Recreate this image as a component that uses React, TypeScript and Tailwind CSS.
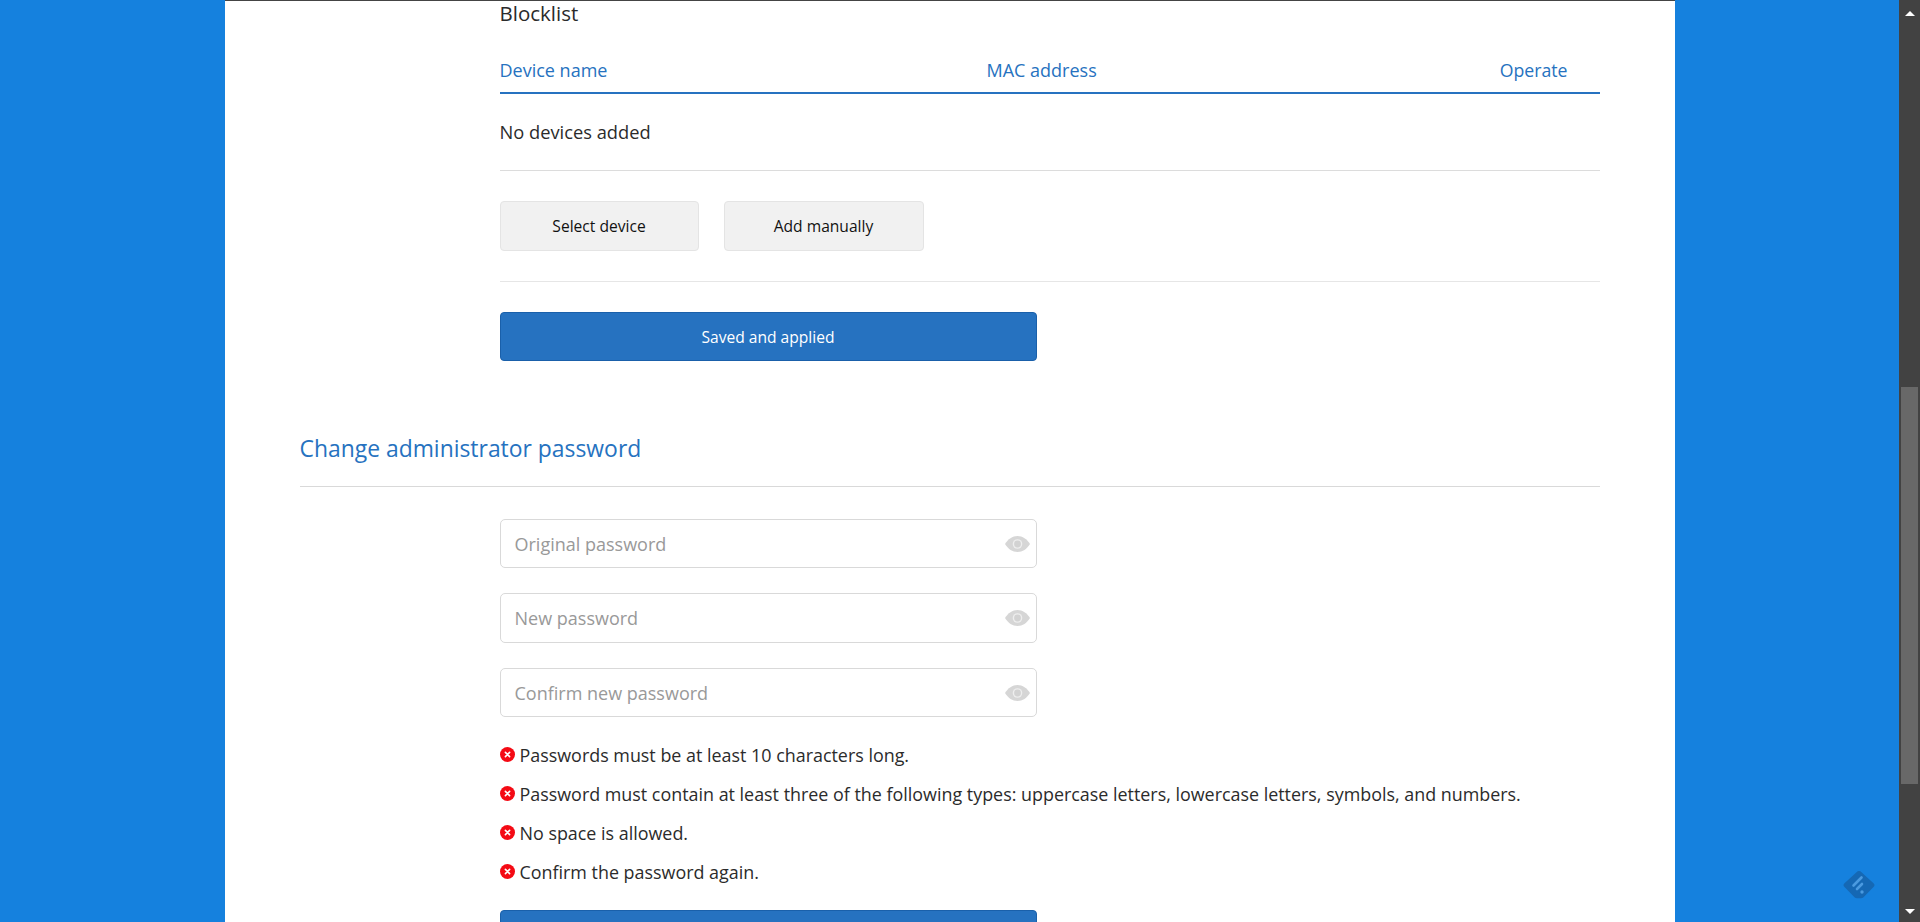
import React from 'react';

const PasswordField = ({ placeholder, short }: { placeholder: string; short?: boolean }) => (
  <div className={`flex items-center justify-between w-[537px] ${short ? 'h-[49px]' : 'h-[50px]'} border border-[#d9d9d9] rounded-[5px] pl-[14px] pr-[6px] bg-white`}>
    <span className={`text-[18px] text-[#999999] ${short ? 'pt-[1px]' : ''}`}>{placeholder}</span>
    <svg width="25" height="16" viewBox="0 0 25 16">
      <path d="M0 8C3 3 7.500 0 12.500 0S22 3 25 8c-3 5-7.500 8-12.500 8S3 13 0 8z" fill="#d6d6d6" />
      <circle cx="12.500" cy="8" r="4.800" fill="#eeeeee" />
      <circle cx="12.500" cy="8" r="3.400" fill="#d2d2d2" />
    </svg>
  </div>
);

const Rule = ({ text }: { text: string }) => (
  <div className="flex items-center h-[39px] gap-[5px] text-[17.900px] text-[#2b2b2b] whitespace-nowrap">
    <svg width="15" height="15" viewBox="0 0 15 15" className="shrink-0 -mt-[1px]">
      <circle cx="7.500" cy="7.500" r="7.500" fill="#f40a14" />
      <path d="M5.400 5.400l4.200 4.200M9.600 5.400l-4.200 4.200" stroke="#ffffff" strokeWidth="1.600" strokeLinecap="round" />
    </svg>
    <span className="pt-[1px]">{text}</span>
  </div>
);

export default function App() {
  return (
    <div className="relative flex h-screen overflow-hidden bg-[#424242] font-['Open_Sans','Noto_Sans',sans-serif]">
      <div className="flex flex-1 justify-center overflow-hidden bg-[#1581de]">
        <div className="w-[1450px] h-full overflow-hidden bg-white px-[75px] border-t border-t-[#444444]">
          <div className="pl-[200px]">
            <div className="text-[20.500px] leading-[25px] text-[#2b2b2b]">Blocklist</div>

            {/* Table */}
            <div className="grid grid-cols-[487px_1fr_auto] h-[37px] mt-[31px] pr-[32px] border-b-2 border-[#2672c0] text-[18px] leading-[26px] text-[#2672c0]">
              <span>Device name</span>
              <span>MAC address</span>
              <span className="text-[17.700px]">Operate</span>
            </div>
            <div className="flex items-center h-[77px] border-b border-[#dcdcdc] text-[18.300px] text-[#2b2b2b]">
              No devices added
            </div>

            <div className="flex gap-[25px] py-[30px] border-b border-[#e6e6e6]">
              <button className="w-[199px] h-[50px] pt-[2px] rounded-[4px] bg-[#f1f1f1] border border-[#e4e4e4] text-[15.600px] text-[#111111]">Select device</button>
              <button className="w-[200px] h-[50px] pt-[2px] rounded-[4px] bg-[#f1f1f1] border border-[#e4e4e4] text-[15.600px] text-[#111111]">Add manually</button>
            </div>

            <button className="w-[537px] h-[49px] pt-[2px] mt-[30px] rounded-[4px] bg-[#2672c0] border border-[#1a60aa] text-[15.600px] text-white">Saved and applied</button>
          </div>

          <div className="h-[126px] pt-[73px] border-b border-[#d9d9d9] text-[22.900px] leading-[30px] text-[#2672c0]">
            Change administrator password
          </div>

          <div className="pl-[200px] pt-[32px]">
            <div className="flex flex-col gap-[25px]">
              <PasswordField placeholder="Original password" short />
              <PasswordField placeholder="New password" />
              <PasswordField placeholder="Confirm new password" short />
            </div>
            <div className="mt-[18px]">
              <Rule text="Passwords must be at least 10 characters long." />
              <Rule text="Password must contain at least three of the following types: uppercase letters, lowercase letters, symbols, and numbers." />
              <Rule text="No space is allowed." />
              <Rule text="Confirm the password again." />
            </div>
            <button className="w-[537px] h-[49px] mt-[19px] rounded-[4px] bg-[#2672c0] border border-[#1a60aa]" />
          </div>
        </div>
      </div>

      {/* Scrollbar */}
      <div className="flex flex-col items-center w-[21px] shrink-0 bg-[#424242] pt-[11px]">
        <div className="w-0 h-0 border-x-[5px] border-x-transparent border-b-[5px] border-b-white" />
        <div className="w-[17px] h-[397px] mt-[371px] bg-[#686868]" />
        <div className="w-0 h-0 mt-[125px] border-x-[5px] border-x-transparent border-t-[5px] border-t-white" />
      </div>

      {/* Feedly badge */}
      <svg width="32" height="28" viewBox="0 0 32 28" className="absolute left-[1843px] top-[871px]">
        <path d="M13.500 1.200a3.600 3.600 0 0 1 5 0l12 11a2.600 2.600 0 0 1 0 3.800l-10 10.200a3.500 3.500 0 0 1-2.500 1.100h-4a3.500 3.500 0 0 1-2.500-1.100L1.500 16a2.600 2.600 0 0 1 0-3.800z" fill="#1568b4" />
        <path d="M18.500 6.500l-8 8M19 13l-5 5" stroke="#4a9ae0" strokeWidth="2.600" strokeLinecap="round" />
        <circle cx="19" cy="21" r="1.700" fill="#4a9ae0" />
      </svg>
    </div>
  );
}
